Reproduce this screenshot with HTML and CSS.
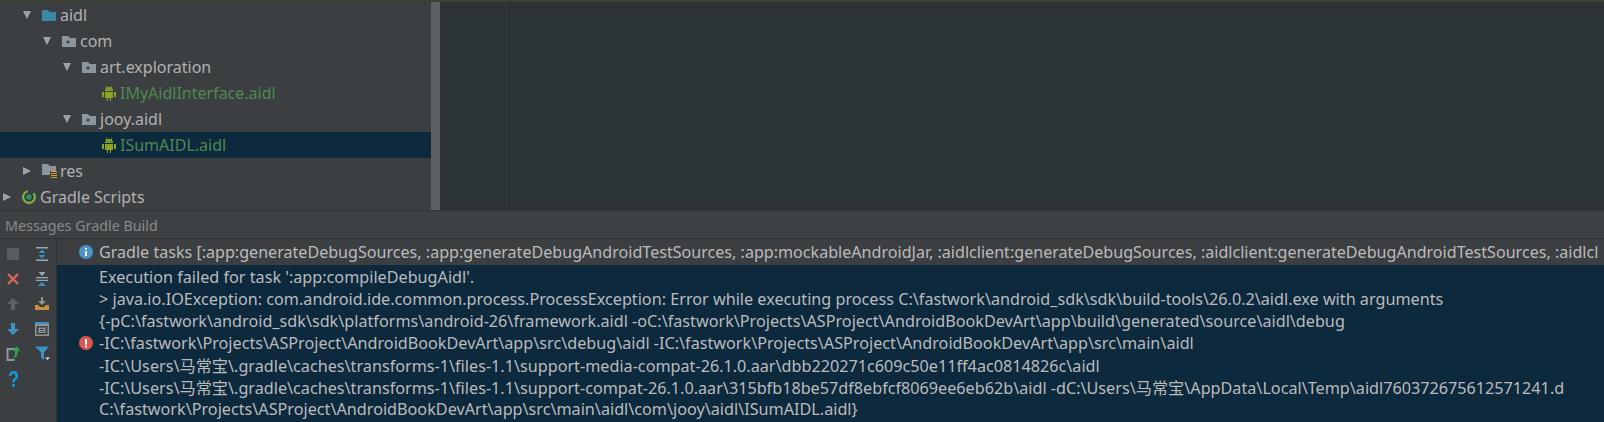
FILE: index.html
```html
<!DOCTYPE html>
<html lang="en">
<head>
<meta charset="utf-8">
<title>Gradle Build</title>
<link rel="stylesheet" href="styles.css">
</head>
<body>
<div class="top">
  <div class="tree">
    <div class="row d1"><span class="arrow down"></span><svg class="ico" viewBox="0 0 14 11"><path fill="#3d87a8" d="M0 0h6l2 2h6v9H0z"/></svg><span>aidl</span></div>
    <div class="row d2"><span class="arrow down"></span><svg class="ico" viewBox="0 0 14 11"><path fill="#8a959e" d="M0 0h6l2 2h6v9H0z"/><circle cx="6" cy="6" r="1.500" fill="#3c3f41"/></svg><span>com</span></div>
    <div class="row d3"><span class="arrow down"></span><svg class="ico" viewBox="0 0 14 11"><path fill="#8a959e" d="M0 0h6l2 2h6v9H0z"/><circle cx="6" cy="6" r="1.500" fill="#3c3f41"/></svg><span>art.exploration</span></div>
    <div class="row d4"><span class="arrow"></span><svg class="ico droid" viewBox="0 0 14 15"><path fill="#8aa61e" d="M3 5a4 4 0 0 1 8 0zM3 6h8v6h-2v3H8v-3H6v3H5v-3H3zM0 6h2v5H0zM12 6h2v5h-2z"/><path stroke="#8aa61e" d="M4 0l1 2M10 0L9 2"/><path fill="#3c3f41" d="M5 3h1v1H5zM8 3h1v1H8z"/></svg><span class="green">IMyAidlInterface.aidl</span></div>
    <div class="row d3"><span class="arrow down"></span><svg class="ico" viewBox="0 0 14 11"><path fill="#8a959e" d="M0 0h6l2 2h6v9H0z"/><circle cx="6" cy="6" r="1.500" fill="#3c3f41"/></svg><span>jooy.aidl</span></div>
    <div class="row d4 selected"><span class="arrow"></span><svg class="ico droid" viewBox="0 0 14 15"><path fill="#8aa61e" d="M3 5a4 4 0 0 1 8 0zM3 6h8v6h-2v3H8v-3H6v3H5v-3H3zM0 6h2v5H0zM12 6h2v5h-2z"/><path stroke="#8aa61e" d="M4 0l1 2M10 0L9 2"/><path fill="#0d293e" d="M5 3h1v1H5zM8 3h1v1H8z"/></svg><span class="green">ISumAIDL.aidl</span></div>
    <div class="row d1"><span class="arrow right"></span><svg class="ico res" viewBox="0 0 15 14"><path fill="#8a959e" d="M0 0h6l2 2h6v5H8v4H0z"/><path fill="#e09a2b" d="M9 7h6v1H9zM9 9h6v1H9zM9 11h6v1H9zM9 13h6v1H9z"/></svg><span>res</span></div>
    <div class="row d0"><span class="arrow right"></span><svg class="ico gradle" viewBox="0 0 14 14"><circle cx="7" cy="7" r="5.900" fill="none" stroke="#7cb342" stroke-width="2.200" stroke-dasharray="30 7" transform="rotate(-40 7 7)"/><circle cx="7" cy="7" r="2.600" fill="#1f9d6b"/></svg><span>Gradle Scripts</span></div>
  </div>
  <div class="scrollbar"></div>
  <div class="editor"><div class="gutter"></div></div>
</div>
<div class="tabs">Messages Gradle Build</div>
<div class="panel">
  <div class="tools">
    <svg viewBox="0 0 14 14"><rect x="1" y="1" width="12" height="12" fill="#5a5c5e"/></svg>
    <svg viewBox="0 0 14 14"><path fill="#9aa7b0" d="M1 0h12v1.500H1zM1 12.500h12V14H1z"/><path fill="#3d8fc4" d="M7 2.500L10.500 6h-7zM7 11.500L10.500 8h-7z"/></svg>
    <svg viewBox="0 0 14 14"><path stroke="#d9645a" stroke-width="2.400" d="M2 2l10 10M12 2L2 12"/></svg>
    <svg viewBox="0 0 14 14"><path fill="#9aa7b0" d="M1 5h12v1.200H1zM1 7.800h12V9H1zM3.500 0h7L7 4z"/><path fill="#3d8fc4" d="M7 10l4 4H3z"/></svg>
    <svg viewBox="0 0 14 14"><path fill="#5f6163" d="M7 1l6 6H9v6H5V7H1z"/></svg>
    <svg viewBox="0 0 14 14"><path fill="#8f9599" d="M6 0h2v4h3L7 8 3 4h3z"/><path fill="#c98f3f" d="M0 8h3l2 2h4l2-2h3v5H0z"/></svg>
    <svg viewBox="0 0 14 14"><path fill="#3d8fc4" d="M5 1h4v6h4l-6 6-6-6h4z"/></svg>
    <svg viewBox="0 0 14 14"><path fill="#8f9599" d="M0 1h14v13H0zM1.500 4v8.500h11V4z"/><path fill="#3d8fc4" d="M0 0h14v2H0z"/><path fill="#8f9599" d="M3.500 5.500h7V11h-7zM5 7v1h4V7zM5 9v.8h4V9z"/></svg>
    <svg class="wide" viewBox="0 0 14 15"><path fill="#8f9599" d="M0 2h10v2H2v9h6v2H0z"/><path fill="#2e9e4f" d="M10 0l4 5h-2.500c0 4-2 7-5.500 8 2.500-2 2.500-5 2.500-8H6z"/></svg>
    <svg class="wide" viewBox="0 0 15 14"><path fill="#3d8fc4" d="M0 0h14L9 6v8L6 11V6z"/><path fill="#dddddd" d="M10 11h5l-2.500 2.500z"/></svg>
    <svg class="help" viewBox="0 0 9 16"><path fill="none" stroke="#119ad8" stroke-width="2.400" d="M1.200 5c0-5 6.600-5 6.600 0 0 3-3.300 3-3.300 6.500"/><rect x="3.200" y="13" width="2.600" height="3" fill="#119ad8"/></svg>
  </div>
  <div class="messages">
    <div class="msg head"><svg class="mark" viewBox="0 0 14 14"><circle cx="7" cy="7" r="7" fill="#4a94c9"/><path fill="#fff" d="M6 3h2v1.800H6zM6 6h2v5H6z"/></svg><span>Gradle tasks [:app:generateDebugSources, :app:generateDebugAndroidTestSources, :app:mockableAndroidJar, :aidlclient:generateDebugSources, :aidlclient:generateDebugAndroidTestSources, :aidlcl</span></div>
    <div class="msg"><i class="mark"></i><span>Execution failed for task ':app:compileDebugAidl'.</span></div>
    <div class="msg"><i class="mark"></i><span>&gt; java.io.IOException: com.android.ide.common.process.ProcessException: Error while executing process C:\fastwork\android_sdk\sdk\build-tools\26.0.2\aidl.exe with arguments</span></div>
    <div class="msg"><i class="mark"></i><span>{-pC:\fastwork\android_sdk\sdk\platforms\android-26\framework.aidl -oC:\fastwork\Projects\ASProject\AndroidBookDevArt\app\build\generated\source\aidl\debug</span></div>
    <div class="msg"><svg class="mark" viewBox="0 0 14 14"><circle cx="7" cy="7" r="7" fill="#d9574f"/><path fill="#fff" d="M6 3h2v5.500H6zM6 9.500h2v2H6z"/></svg><span>-IC:\fastwork\Projects\ASProject\AndroidBookDevArt\app\src\debug\aidl -IC:\fastwork\Projects\ASProject\AndroidBookDevArt\app\src\main\aidl</span></div>
    <div class="msg"><i class="mark"></i><span>-IC:\Users\马常宝\.gradle\caches\transforms-1\files-1.1\support-media-compat-26.1.0.aar\dbb220271c609c50e11ff4ac0814826c\aidl</span></div>
    <div class="msg"><i class="mark"></i><span>-IC:\Users\马常宝\.gradle\caches\transforms-1\files-1.1\support-compat-26.1.0.aar\315bfb18be57df8ebfcf8069ee6eb62b\aidl -dC:\Users\马常宝\AppData\Local\Temp\aidl760372675612571241.d</span></div>
    <div class="msg"><i class="mark"></i><span>C:\fastwork\Projects\ASProject\AndroidBookDevArt\app\src\main\aidl\com\jooy\aidl\ISumAIDL.aidl}</span></div>
  </div>
</div>
</body>
</html>
```
FILE: styles.css
```css
* { box-sizing: border-box; }
html, body { margin: 0; height: 422px; overflow: hidden; background: #3c3f41; }
body { font-family: "Noto Sans", "Noto Sans CJK SC", sans-serif; font-size: 16.2px; color: #bbbbbb; }
.top { display: flex; height: 210px; border-top: 2px solid #3a4238; }
.tree { width: 431px; margin-top: -2px; padding-top: 2px; display: flex; flex-direction: column; }
.row { display: flex; align-items: center; height: 26px; flex: none; color: #afb1b3; font-size: 16px; }
.d0 { padding-left: 3px; }
.d1 { padding-left: 23px; }
.d2 { padding-left: 43px; }
.d3 { padding-left: 63px; }
.d4 { padding-left: 83px; }
.selected { background: #0d293e; }
.arrow { width: 19px; height: 0; flex: none; position: relative; }
.arrow.down::before { content: ""; position: absolute; left: 0; top: -4px; border-style: solid; border-width: 8px 4px 0; border-color: #a0a2a4 transparent transparent; }
.arrow.right::before { content: ""; position: absolute; left: 0; top: -4px; border-style: solid; border-width: 4px 0 4px 8px; border-color: transparent transparent transparent #a0a2a4; }
.ico { width: 14px; height: 11px; margin-right: 4px; flex: none; }
.ico.droid { height: 15px; }
.ico.res { width: 15px; height: 14px; margin-right: 3px; }
.ico.gradle { height: 14px; }
.green { color: #4d8a4d; }
.scrollbar { width: 9px; background: #5d5f60; }
.editor { flex: 1; background: #2b3336; border-left: 1px solid #303234; display: flex; }
.gutter { width: 66px; border-right: 1px solid #343c3f; }
.tabs { height: 29px; line-height: 29px; padding-left: 5px; font-size: 14.3px; color: #878a8c; background: #3e4143; border-top: 1px solid #333; border-bottom: 1px solid #2f3133; }
.panel { display: flex; height: 183px; }
.tools { width: 57px; flex: none; display: grid; grid-template-columns: 18px 18px; column-gap: 11px; grid-auto-rows: 25px; padding: 2px 0 0 4px; justify-items: center; align-items: center; align-content: start; border-right: 1px solid #2f3133; }
.tools svg { width: 14px; height: 14px; }
.tools svg.wide { width: 15px; height: 15px; }
.tools svg.help { width: 9px; height: 16px; }
.messages { flex: 1; min-width: 0; background: #0d293e; overflow: hidden; }
.msg { display: flex; align-items: center; height: 22px; padding-left: 22px; white-space: nowrap; }
.msg.head { height: 26px; background: #3c3f41; margin-bottom: 1px; font-size: 16.1px; }
.mark { width: 14px; height: 14px; margin-right: 6px; flex: none; }
```
